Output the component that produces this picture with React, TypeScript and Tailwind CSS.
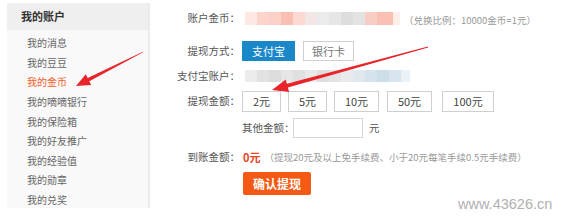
import React from "react";

function Sidebar() {
  const items = ["我的消息", "我的豆豆", "我的金币", "我的嘀嘀银行", "我的保险箱", "我的好友推广", "我的经验值", "我的勋章", "我的兑奖"];
  return (
    <div className="ml-[7px] mt-[3px] w-[143px] h-[205px] bg-[#f9f9f9] border-r-2 border-[#ececec] shrink-0">
      <div className="h-[27px] bg-[#efefef] pl-[14px] flex items-center text-[11px] font-bold text-[#333]">我的账户</div>
      <div className="pt-[3px]">
        {items.map((t) => (
          <div
            key={t}
            className={
              "h-[19.6px] flex items-center pl-[20px] text-[10px] " +
              (t === "我的金币" ? "text-[#f0622d]" : "text-[#666]")
            }
          >
            {t}
          </div>
        ))}
      </div>
    </div>
  );
}

function Label({ children }: { children: React.ReactNode }) {
  return <div className="w-[90px] text-right text-[10.5px] text-[#555] shrink-0 whitespace-nowrap">{children}</div>;
}

function Mosaic1() {
  return (
    <div className="flex h-[13px]">
      <div className="w-[12px] bg-[#fde8e4]" />
      <div className="w-[12px] bg-[#fcd4cc]" />
      <div className="w-[12px] bg-[#fbd0c7]" />
      <div className="w-[12px] bg-[#f9bfb3]" />
      <div className="w-[12px] bg-[#fcd9d2]" />
      <div className="w-[12px] bg-[#f3e7e5]" />
      <div className="w-[12px] bg-[#ebebeb]" />
      <div className="w-[12px] bg-[#e6e6e6]" />
      <div className="w-[12px] bg-[#dddddd]" />
      <div className="w-[12px] bg-[#e3e3e3]" />
      <div className="w-[12px] bg-[#f7cdc4]" />
      <div className="w-[16px] bg-[#fac0b3]" />
      <div className="w-[7px] bg-[#fdeeea]" />
    </div>
  );
}

function Mosaic2() {
  return (
    <div className="flex h-[12px]">
      <div className="w-[12px] bg-[#ececec]" />
      <div className="w-[12px] bg-[#e2e2e2]" />
      <div className="w-[12px] bg-[#dcdcdc]" />
      <div className="w-[12px] bg-[#e6e6e6]" />
      <div className="w-[12px] bg-[#e0e0e0]" />
      <div className="w-[12px] bg-[#e9e9e9]" />
      <div className="w-[12px] bg-[#dedede]" />
      <div className="w-[12px] bg-[#e4e4e4]" />
      <div className="w-[12px] bg-[#e8ebee]" />
      <div className="w-[12px] bg-[#dfe7ef]" />
      <div className="w-[12px] bg-[#d6e3ee]" />
      <div className="w-[12px] bg-[#cddeeb]" />
      <div className="w-[12px] bg-[#d8e5f0]" />
      <div className="w-[9px] bg-[#eaf1f7]" />
    </div>
  );
}

function AmountBtn({ w, children, ml }: { w: string; children: React.ReactNode; ml: string }) {
  return (
    <div className={`${w} ${ml} h-[21px] border border-[#cfcfcf] bg-white flex items-center justify-center text-[11px] text-[#444]`}>
      {children}
    </div>
  );
}

function Main() {
  return (
    <div className="flex flex-col pt-[6px] whitespace-nowrap">
      <div className="flex items-center h-[24px]">
        <Label>账户金币：</Label>
        <div className="ml-[5px]">
          <Mosaic1 />
        </div>
        <div className="ml-[4px] mt-[4px] text-[9.5px] text-[#999]">（兑换比例：10000金币=1元）</div>
      </div>
      <div className="flex items-center h-[22px] mt-[10px]">
        <Label>提现方式：</Label>
        <div className="ml-[2px] w-[53px] h-[20px] bg-[#1a87c8] text-white text-[11px] flex items-center justify-center">支付宝</div>
        <div className="ml-[8px] w-[51px] h-[20px] border border-[#cfcfcf] bg-white text-[#777] text-[11px] flex items-center justify-center">银行卡</div>
      </div>
      <div className="flex items-center h-[22px] mt-[3px]">
        <Label>支付宝账户：</Label>
        <div className="ml-[5px]">
          <Mosaic2 />
        </div>
      </div>
      <div className="flex items-center h-[22px] mt-[3px]">
        <Label>提现金额：</Label>
        <AmountBtn w="w-[39px]" ml="ml-[2px]">2元</AmountBtn>
        <AmountBtn w="w-[39px]" ml="ml-[7px]">5元</AmountBtn>
        <AmountBtn w="w-[45px]" ml="ml-[7px]">10元</AmountBtn>
        <AmountBtn w="w-[45px]" ml="ml-[8px]">50元</AmountBtn>
        <AmountBtn w="w-[52px]" ml="ml-[10px]">100元</AmountBtn>
      </div>
      <div className="flex items-center h-[20px] mt-[6px]">
        <div className="w-[92px] shrink-0" />
        <div className="w-[51px] shrink-0 text-[10.5px] text-[#555] whitespace-nowrap">其他金额：</div>
        <div className="w-[70px] h-[20px] border border-[#d6d6d6] bg-white shrink-0" />
        <div className="ml-[6px] text-[10.5px] text-[#555]">元</div>
      </div>
      <div className="flex items-center h-[20px] mt-[9px]">
        <Label>到账金额：</Label>
        <div className="ml-[3px] text-[11px] font-bold text-[#e8431b]">0元</div>
        <div className="ml-[4px] text-[9.5px] text-[#999]">（提现20元及以上免手续费、小于20元每笔手续0.5元手续费）</div>
      </div>
      <div className="flex mt-[5px]">
        <div className="w-[93px] shrink-0" />
        <div className="w-[68px] h-[23px] rounded-[2px] bg-[#f55a14] text-white text-[12px] font-bold flex items-center justify-center">确认提现</div>
      </div>
    </div>
  );
}

export default function App() {
  return (
    <div className="relative w-[566px] h-[216px] bg-white overflow-hidden font-['Noto_Sans_CJK_SC','Noto_Sans',sans-serif]">
      <div className="flex">
        <Sidebar />
        <Main />
      </div>
      <svg className="absolute left-0 top-0 pointer-events-none" width="566" height="216" viewBox="0 0 566 216">
        <polygon
          fill="#e8242a"
          points="142.9,51.7 87.7,78.1 85.8,74.3 76,86 91.2,85.1 89.3,81.3 143.1,52.3"
        />
        <polygon
          fill="#e8242a"
          points="427.9,46.6 286.9,83.8 285.7,79.4 272,90 289.1,92 287.9,87.6 428.1,47.4"
        />
      </svg>
      <div className="absolute left-[458px] top-[194px] text-[14.5px] text-[#b0b0b0] font-['Liberation_Sans',Arial,sans-serif]">
        www.43626.cn
      </div>
    </div>
  );
}
